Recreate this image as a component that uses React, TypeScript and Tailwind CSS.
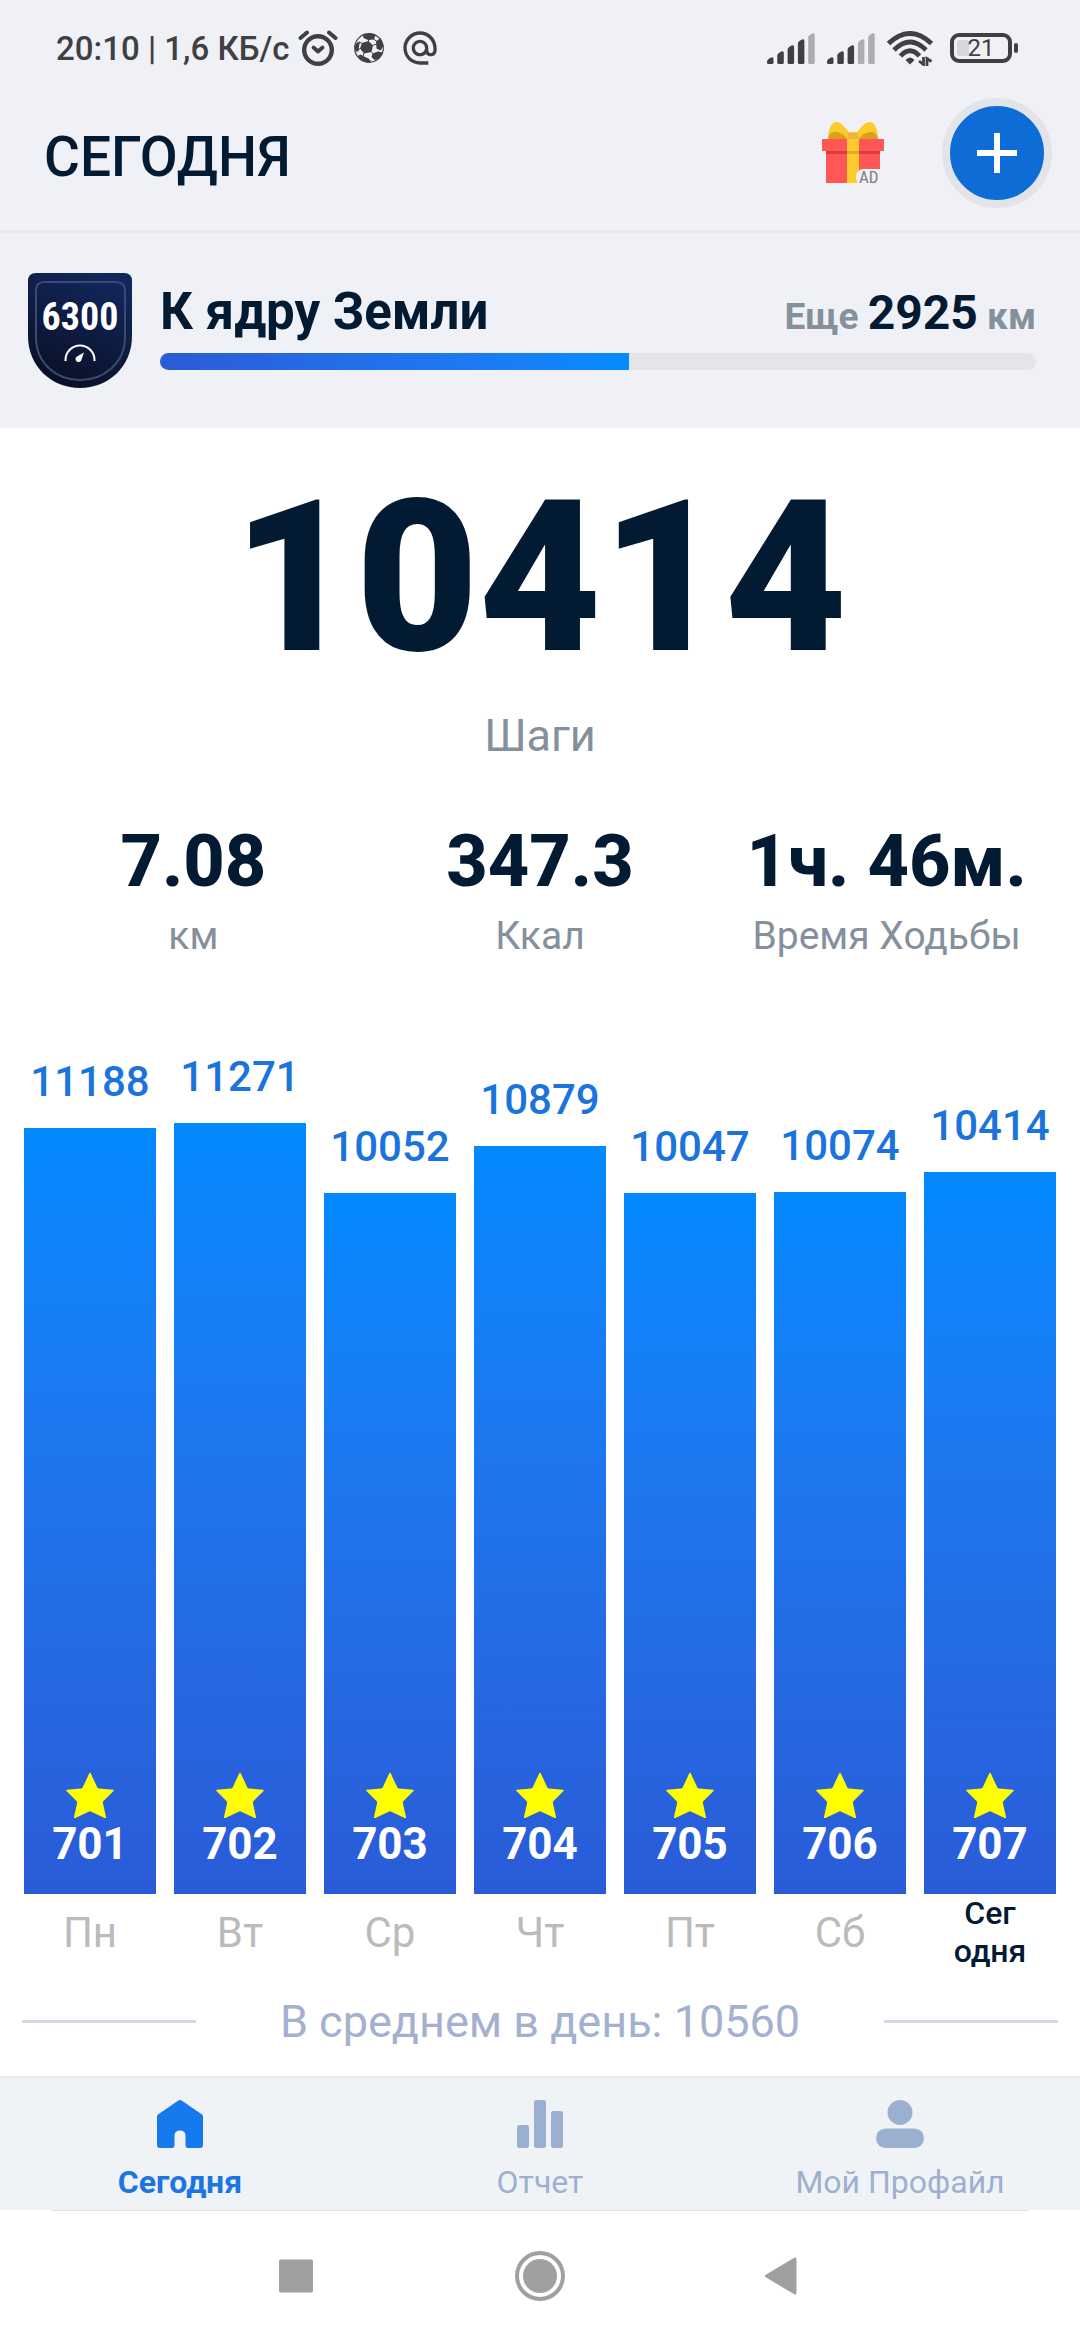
import { MdAlternateEmail } from 'react-icons/md'

const DAYS = [
  { label: 'Пн', steps: 11188, streak: 701 },
  { label: 'Вт', steps: 11271, streak: 702 },
  { label: 'Ср', steps: 10052, streak: 703 },
  { label: 'Чт', steps: 10879, streak: 704 },
  { label: 'Пт', steps: 10047, streak: 705 },
  { label: 'Сб', steps: 10074, streak: 706 },
  { label: 'Сегодня', steps: 10414, streak: 707, today: true },
]

const STATS = [
  { value: '7.08', label: 'км' },
  { value: '347.3', label: 'Ккал' },
  { value: '1ч. 46м.', label: 'Время Ходьбы' },
]

const GOAL_KM = 6300
const LEFT_KM = 2925

const barHeight = (steps: number) => Math.round(124 + steps * 0.0574)

function AlarmIcon() {
  return (
    <svg viewBox="0 0 40 36" className="w-10 h-9" fill="none" stroke="#404042" strokeLinecap="round">
      <circle cx="20" cy="20" r="13.800" strokeWidth="4.400" />
      <path d="M2.500 8 9 2.500M37.500 8 31 2.500" strokeWidth="4" />
      <path d="M15.500 17.500 20 21.500 24.500 17.500" strokeWidth="3.800" strokeLinejoin="round" />
    </svg>
  )
}

function BallIcon() {
  return (
    <svg viewBox="0 0 30 30" className="w-[30px] h-[30px]">
      <circle cx="15" cy="15" r="14.300" fill="#eff0f4" stroke="#404042" strokeWidth="1.200" />
      <g fill="#404042">
        <path d="M8 10 14.500 8 19 12.500 17.500 19 10 20.500 6 15.500Z" />
        <path d="M9 1.500 15 .500 21.500 1.800 20 6.500 14 7 9.500 5Z" />
        <path d="M22 8.500 26.500 5 29.500 13 26.500 17.500 22.500 15.500Z" />
        <path d="M18.500 20.500 24 18.500 28.500 19.500 25.500 25.500 20.500 27 17.500 24Z" />
        <path d="M6.500 21.500 10 23.500 14.500 25.500 17.500 28.500 13 29.500 7 26.800 3.500 23Z" />
        <path d="M.500 13 3 9.500 6 8.500 5 13.500 4.500 18.500 1.500 18.500Z" />
      </g>
      <path
        d="M14.500 8.500V6.500M18.500 12.500 22.500 11M17 18.500 19.500 21M10 20 9 23.500M6.500 15.500 4 16.500M8.500 10.500 5 9M19.500 6 23 8.500"
        stroke="#404042"
      />
    </svg>
  )
}

function SignalIcon({ level }: { level: number }) {
  const tops = [24, 18, 12, 6, 0]
  return (
    <svg viewBox="0 0 48 31" className="w-12 h-[31px]">
      {tops.map((top, i) => (
        <path
          key={top}
          transform={`translate(${i * 10.3} 0)`}
          d={`M0 ${top + 4.5}q0-1.500 1.500-2.500l3-1.700q2-.600 2 1.700V29.500q0 1.500-1.500 1.500h-3.500q-1.500 0-1.500-1.500z`}
          fill={i < level ? '#404042' : '#acadb1'}
        />
      ))}
    </svg>
  )
}

function WifiIcon() {
  return (
    <svg viewBox="0 0 47 35" className="w-[47px] h-[35px]" fill="none" stroke="#404042" strokeWidth="4.800">
      <path d="M1.500 12.500Q23 -7.500 44.500 12.500" />
      <path d="M7 19Q23 3 39 19" />
      <path d="M13.500 25Q23 14.500 32.500 25" />
      <path d="M18.500 29Q23 24 27.500 29L23 33.500Z" fill="#404042" stroke="none" />
      <path d="M32 30 36.500 33.500V26M40 35V27.500L44.500 30.500" strokeWidth="2.800" />
    </svg>
  )
}

function StatusBar() {
  return (
    <div className="flex items-center justify-between h-24 pl-14 pr-[62px] text-[#404042]">
      <div className="flex items-center">
        <span className="text-[33px] font-medium leading-none">20:10 | 1,6 КБ/с</span>
        <div className="flex items-center gap-4 ml-2">
          <AlarmIcon />
          <BallIcon />
          <MdAlternateEmail className="w-10 h-10" />
        </div>
      </div>
      <div className="flex items-center gap-3">
        <SignalIcon level={4} />
        <SignalIcon level={3} />
        <WifiIcon />
        <div className="flex items-center ml-1">
          <div className="relative flex items-center justify-center w-[62px] h-[30px] border-4 border-[#404042] rounded-[9px]">
            <span className="absolute left-[3px] top-[3px] w-3 h-4 rounded-xs bg-[#d6d7da]" />
            <span className="relative text-2xl leading-none">21</span>
          </div>
          <span className="ml-0.5 w-1 h-2.5 rounded-full bg-[#404042]" />
        </div>
      </div>
    </div>
  )
}

function GiftIcon() {
  return (
    <svg viewBox="0 0 62 62" className="w-[62px] h-[62px] overflow-visible">
      <path d="M6 17C6 8 9 0 14 0c5 0 9 5 13 10h8C39 5 43 0 48 0c5 0 8 8 8 17z" fill="#fccc2e" />
      <path d="M6 17c1-5 3-7 7-7 5 0 9 2 12 7zM56 17c-1-5-3-7-7-7-5 0-9 2-12 7z" fill="#dd9f1c" />
      <path d="M4 28h54v33H4z" fill="#ff5656" />
      <path d="M0 17h62v12H0z" fill="#ff5656" />
      <path d="M4 29h54v3H4z" fill="#d93c40" />
      <path d="M25 11h12v50H25z" fill="#fccc2e" />
      <path d="M26 11h10l1 6H25z" fill="#f0b440" />
      <path d="M25 29h12v3H25z" fill="#e8a820" />
      <path d="M62 47H41c-4 0-7 4-7 8 0 3 1 5 2 7h26z" fill="#f0f1f6" />
      <text x="37" y="61" fill="#808080" className="text-[17px] font-['Roboto_Condensed',Roboto,sans-serif]">AD</text>
    </svg>
  )
}

function Header() {
  return (
    <header className="flex items-center justify-between h-[137px] pl-11 pr-7 pb-5 border-b-3 border-[#e8e9ee]">
      <h1 className="pt-2 text-[55px] font-medium leading-none">СЕГОДНЯ</h1>
      <div className="flex items-center gap-[58px]">
        <button aria-label="AD">
          <GiftIcon />
        </button>
        <button aria-label="+" className="w-[110px] h-[110px] rounded-full border-8 border-[#e2e4e9] bg-[#0d6cd6] flex items-center justify-center">
          <svg viewBox="0 0 40 40" className="w-10 h-10" stroke="#fff" strokeWidth="6">
            <path d="M20 0v40M0 20h40" />
          </svg>
        </button>
      </div>
    </header>
  )
}

function Badge() {
  return (
    <svg viewBox="0 0 104 115" className="w-[104px] h-[115px] shrink-0">
      <defs>
        <linearGradient id="badge" x1="0.700" y1="0" x2="0.300" y2="1">
          <stop offset="0" stopColor="#12275c" />
          <stop offset="0.500" stopColor="#0e1b42" />
          <stop offset="1" stopColor="#0a1022" />
        </linearGradient>
      </defs>
      <path d="M8 0h88q8 0 8 8v55c0 31-24 52-52 52S0 94 0 63V8q0-8 8-8z" fill="url(#badge)" />
      <path d="M16 9h72q9 0 9 9v46c0 26-21 43-45 43S8 90 8 64V18q0-9 8-9z" fill="none" stroke="#3c4a72" strokeWidth="2" />
      <text x="52" y="57" textAnchor="middle" fill="#fff" className="text-[38px] font-bold font-['Liberation_Sans_Narrow','Roboto_Condensed',Roboto,sans-serif]">
        {GOAL_KM}
      </text>
      <path d="M37.500 88v-1a14.500 14.500 0 0 1 29 0v1" fill="none" stroke="#fff" strokeWidth="2" />
      <path d="M56 79.500 53.500 86.500a3 3 0 1 1-4.500-3z" fill="#fff" />
    </svg>
  )
}

function Challenge() {
  const done = ((GOAL_KM - LEFT_KM) / GOAL_KM) * 100
  return (
    <section className="flex items-center gap-7 h-[195px] pl-7 pr-11">
      <Badge />
      <div className="flex-1">
        <div className="flex items-baseline justify-between font-bold">
          <h2 className="text-[51px] leading-10">К ядру Земли</h2>
          <p className="text-[37px] leading-10 text-[#84909c]">
            Еще <span className="text-[48px] leading-10 text-[#021b33]">{LEFT_KM}</span> км
          </p>
        </div>
        <div className="mt-4 h-[17px] rounded-full overflow-hidden bg-[#e4e5e7]">
          <div className="h-full bg-linear-to-r from-[#2b5bd7] to-[#058aff]" style={{ width: `${done}%` }} />
        </div>
      </div>
    </section>
  )
}

function DayBar({ day }: { day: (typeof DAYS)[number] }) {
  return (
    <div className="flex-1 min-w-0 flex flex-col items-center">
      <span className="mb-[18px] text-[42px] leading-[56px] font-medium text-[#1b74dc]">{day.steps}</span>
      <div
        className="w-full flex flex-col items-center justify-end pb-6 bg-linear-to-b from-[#028aff] to-[#2a5bd7]"
        style={{ height: barHeight(day.steps) }}
      >
        <svg viewBox="0 0 47 45" className="w-12 h-[46px]">
          <path
            d="M23.500 1.500 30 15.500Q30.500 17 32.500 17L46 18 36 28Q35 29.500 35.500 31L38.500 44.500 23.500 37.500 8.500 44.500 11.500 31Q12 29.500 11 28L1 18 14.500 17Q16.500 17 17 15.500Z"
            fill="#ff0"
            stroke="#ff0"
            strokeWidth="1.500"
            strokeLinejoin="round"
          />
        </svg>
        <span className="text-[44px] leading-[52px] font-bold text-white">{day.streak}</span>
      </div>
      <div className="h-[76px] flex items-center justify-center">
        {day.today ? (
          <span className="text-center text-[32px] leading-[38px] font-medium">Сег<br />одня</span>
        ) : (
          <span className="pt-0.5 text-[42px] leading-none text-[#bbb]">{day.label}</span>
        )}
      </div>
    </div>
  )
}

function TabBar() {
  return (
    <nav className="h-[134px] pt-[22px] border-t-2 border-[#e8eaf4] bg-[#f0f3f5] grid grid-cols-3 text-[32px] leading-[38px] text-[#9db0d0]">
      <a href="#today" className="flex flex-col items-center gap-[15px] font-bold text-[#1b76e3]">
        <svg viewBox="0 0 46 48" className="w-[46px] h-12">
          <path d="M21 .800q2-1.400 4 0l20 13.700q1 .700 1 2V45q0 3-3 3H31q-2.500 0-2.500-3V36q0-5.500-5.500-5.500T17.500 36v9q0 3-2.500 3H3q-3 0-3-3V16.500q0-1.300 1-2z" fill="#167aef" />
        </svg>
        Сегодня
      </a>
      <a href="#report" className="flex flex-col items-center gap-[15px]">
        <svg viewBox="0 0 46 48" className="w-[46px] h-12" fill="#9bb0d0">
          <rect y="25" width="12" height="23" rx="2.500" />
          <rect x="17" width="12" height="48" rx="2.500" />
          <rect x="34" y="11" width="12" height="37" rx="2.500" />
        </svg>
        Отчет
      </a>
      <a href="#profile" className="flex flex-col items-center gap-[15px]">
        <svg viewBox="0 0 48 48" className="w-12 h-12" fill="#9bb0d0">
          <circle cx="24" cy="12.500" r="12.500" />
          <rect y="28.500" width="48" height="19.500" rx="9.700" />
        </svg>
        Мой Профайл
      </a>
    </nav>
  )
}

function SystemNav() {
  return (
    <div className="px-[52px]">
      <div className="flex items-center justify-center gap-[194px] h-[130px] border-t border-[#e0e0e0]">
        <button aria-label="Недавние">
          <svg viewBox="0 0 50 50" className="w-[50px] h-[50px]" fill="#a0a0a0">
            <rect x="8" y="8.500" width="34" height="33" rx="2" />
          </svg>
        </button>
        <button aria-label="Домой">
          <svg viewBox="0 0 50 50" className="w-[50px] h-[50px]" fill="#a0a0a0">
            <circle cx="25" cy="25" r="17" />
            <circle cx="25" cy="25" r="23" fill="none" stroke="#a0a0a0" strokeWidth="4" />
          </svg>
        </button>
        <button aria-label="Назад">
          <svg viewBox="0 0 50 50" className="w-[50px] h-[50px]" fill="#a0a0a0" stroke="#a0a0a0" strokeWidth="3" strokeLinejoin="round">
            <path d="M7.500 25 36 8V42Z" />
          </svg>
        </button>
      </div>
    </div>
  )
}

export default function App() {
  return (
    <div className="min-h-screen flex flex-col bg-white text-[#021b33] font-[Roboto,sans-serif]">
      <div className="bg-[#f0f1f6]">
        <StatusBar />
        <Header />
        <Challenge />
      </div>

      <main className="flex-1 flex flex-col">
        <section className="pt-[46px] text-center">
          <div className="text-[212px] leading-[208px] font-black">10414</div>
          <div className="mt-[26px] text-[45px] leading-[56px] text-[#84909c]">Шаги</div>
          <div className="mt-14 px-5 grid grid-cols-3">
            {STATS.map((s) => (
              <div key={s.label}>
                <div className="text-[72px] leading-[84px] font-extrabold">{s.value}</div>
                <div className="text-[39px] leading-[52px] text-[#84909c] mt-1.5">{s.label}</div>
              </div>
            ))}
          </div>
        </section>

        <section className="mt-auto flex items-end gap-[18px] px-6">
          {DAYS.map((day) => (
            <DayBar key={day.label} day={day} />
          ))}
        </section>

        <div className="flex items-center justify-between h-[106px] px-[22px] pb-1">
          <span className="w-[174px] h-[3px] bg-[#d5d7e6]" />
          <span className="text-[45px] leading-none text-[#a3b1cf]">В среднем в день: 10560</span>
          <span className="w-[174px] h-[3px] bg-[#d5d7e6]" />
        </div>
      </main>

      <TabBar />
      <SystemNav />
    </div>
  )
}
